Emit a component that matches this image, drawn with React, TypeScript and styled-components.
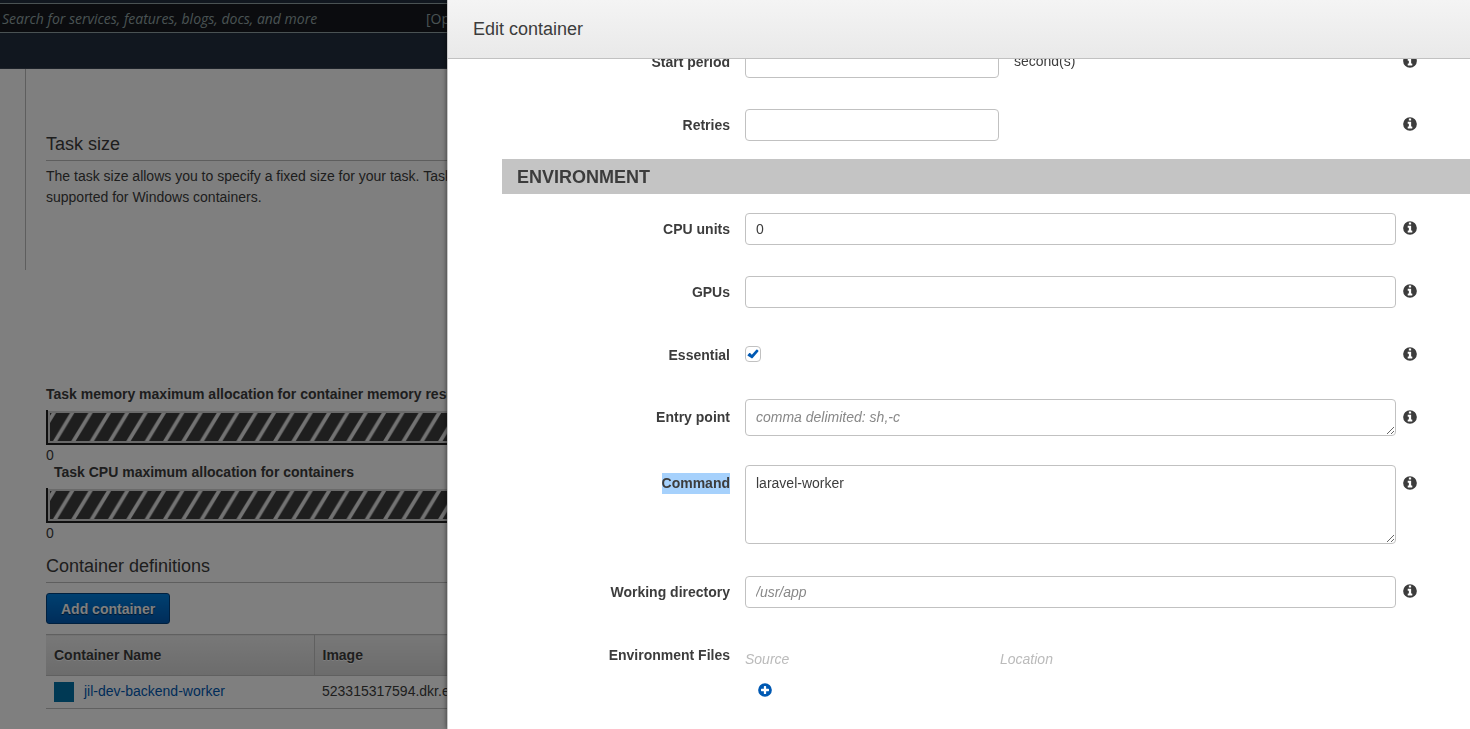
import React, { useId, useState } from 'react';
import styled, { createGlobalStyle } from 'styled-components';

const GlobalStyle = createGlobalStyle`
  *, *::before, *::after { box-sizing: border-box; }
  body {
    margin: 0;
    color: #3c3c3c;
    background: #fff;
    font-family: "Liberation Sans", Arial, sans-serif;
    font-size: 14px;
    line-height: 21px;
  }
  input, textarea, button { font: inherit; color: inherit; }
`;

/* ---------- console page behind the dialog ---------- */

const Page = styled.div`
  height: 100vh;
  overflow: hidden;
`;

const TopNav = styled.header`
  height: 69px;
  padding-top: 3px;
  background: #232f3e;
  border-bottom: 1px solid #3b4552;
`;

const SearchBox = styled.div`
  display: flex;
  align-items: center;
  height: 30px;
  padding-left: 2px;
  background: #16191f;
  border: solid #95a5a6;
  border-width: 1px 0;
  font-family: "Open Sans", sans-serif;
  color: #95a5a6;
`;

const SearchInput = styled.input`
  width: 424px;
  padding: 0;
  border: 0;
  background: none;
  &::placeholder { color: #95a5a6; font-style: italic; opacity: 1; }
`;

const Content = styled.main`
  margin-left: 25px;
`;

const SizeSection = styled.section`
  height: 201px;
  padding: 63px 0 0 20px;
  border-left: 1px solid #bdbdbd;
`;

const Heading = styled.h2`
  margin: 0;
  padding-bottom: 4px;
  border-bottom: 1px solid #bdbdbd;
  font-size: 18px;
  line-height: 24px;
  font-weight: 400;
`;

const Paragraph = styled.p`
  margin: 5px 0 0;
  white-space: nowrap;
`;

const Details = styled.section`
  padding: 114px 0 0 21px;
`;

const BarTitle = styled.div<{ $indent?: boolean }>`
  padding-left: ${(p) => (p.$indent ? '8px' : '0')};
  margin-bottom: 5px;
  font-weight: 700;
  white-space: nowrap;
`;

const BarTrack = styled.div`
  height: 35px;
  padding: 1px 0 0;
  border: solid #202020;
  border-width: 0 0 2px 2px;
`;

const BarFrame = styled.div`
  height: 32px;
  border: 2px solid #d4d4d4;
`;

const BarSvg = styled.svg`
  display: block;
  width: 100%;
  height: 28px;
`;

const BarScale = styled.div`
  line-height: 17px;
  padding-top: 2px;
  margin-bottom: -2px;
`;

const Definitions = styled.section`
  padding: 14px 0 0 21px;
`;

const PrimaryButton = styled.button`
  display: block;
  height: 31px;
  margin: 10px 0;
  padding: 2px 14px 0;
  border: 1px solid #00407f;
  border-radius: 3px;
  background: linear-gradient(#0080e0, #005ab4);
  color: #fff;
  font-weight: 700;
  text-shadow: 0 1px 1px #002a55;
`;

const Table = styled.table`
  width: 100%;
  border-collapse: collapse;
  table-layout: fixed;
`;

const Th = styled.th<{ $first?: boolean }>`
  width: ${(p) => (p.$first ? '268px' : 'auto')};
  height: 41px;
  padding: 0 8px;
  text-align: left;
  border: solid #c1c1c1;
  border-width: 1px 0;
  border-right: ${(p) => (p.$first ? '1px solid #c1c1c1' : '0')};
  background: linear-gradient(#f0f0f0, #d8d8d8);
  text-shadow: 0 1px 0 #fff;
`;

const Td = styled.td`
  height: 33px;
  padding: 0 7px 1px 8px;
  border-bottom: 1px solid #c1c1c1;
`;

const NameCell = styled.div`
  display: flex;
  align-items: center;
  gap: 10px;
`;

const Swatch = styled.span`
  width: 20px;
  height: 20px;
  background: #0073a8;
`;

const NameLink = styled.a`
  color: #0059b3;
  text-decoration: none;
`;

const Backdrop = styled.div`
  position: fixed;
  inset: 0;
  background: rgba(0, 0, 0, 0.5);
`;

/* ---------- dialog ---------- */

const Panel = styled.aside`
  position: fixed;
  inset: 0 0 0 447px;
  display: flex;
  flex-direction: column;
  background: #fff;
  border-left: 1px solid #c8c8c8;
  box-shadow: 0 0 5px rgba(0, 0, 0, 0.6);
`;

const PanelHeader = styled.header`
  flex: none;
  height: 59px;
  padding: 17px 25px 0;
  background: linear-gradient(#f4f4f4, #e9e9e9);
  border-bottom: 1px solid #c1c1c1;
`;

const PanelTitle = styled.h1`
  margin: 0;
  font-size: 18px;
  line-height: 24px;
  font-weight: 400;
`;

const PanelBody = styled.div`
  flex: 1;
  min-height: 0;
  overflow: hidden;
`;

/* The form starts slightly scrolled under the header. */
const Form = styled.form`
  margin-top: -13px;
  padding-left: 54px;
`;

const Group = styled.div`
  display: flex;
  flex-direction: column;
  gap: 31px;
`;

const Row = styled.div<{ $multiline?: boolean }>`
  display: grid;
  grid-template-columns: 228px minmax(0, 1fr) 16px;
  column-gap: 15px;
  align-items: start;
  min-height: 32px;
  padding-right: 52px;
  margin-top: ${(p) => (p.$multiline ? '-3px' : '0')};
  margin-bottom: ${(p) => (p.$multiline ? '1px' : '0')};
  --text-top: ${(p) => (p.$multiline ? '8px' : '6px')};
  --icon-top: ${(p) => (p.$multiline ? '10px' : '7px')};
`;

const LabelCell = styled.div`
  padding-top: var(--text-top);
  text-align: right;
  font-weight: 700;
`;

const Highlight = styled.mark`
  display: inline-block;
  color: inherit;
  background: #a6d1fc;
`;

const Control = styled.div`
  display: flex;
  align-items: flex-start;
  margin-right: -9px;
`;

const TextInput = styled.input<{ $short?: boolean }>`
  width: ${(p) => (p.$short ? '39%' : '100%')};
  height: 32px;
  padding: 0 10px;
  border: 1px solid #c1c1c1;
  border-radius: 4px;
  background: #fff;
  &::placeholder { color: #888; font-style: italic; opacity: 1; }
`;

const TextArea = styled.textarea<{ $tall?: boolean }>`
  display: block;
  width: 100%;
  height: ${(p) => (p.$tall ? '79px' : '37px')};
  padding: 7px 10px;
  border: 1px solid #c1c1c1;
  border-radius: 4px;
  background: #fff;
  overflow: hidden;
  resize: vertical;
  &::placeholder { color: #888; font-style: italic; opacity: 1; }
`;

const Unit = styled.span`
  padding: 5px 0 0 15px;
`;

const CheckWrap = styled.span`
  display: grid;
  place-items: center;
  margin-top: 7px;
  width: 16px;
  height: 16px;
  > * { grid-area: 1 / 1; }
  > svg { pointer-events: none; }
`;

const CheckInput = styled.input`
  appearance: none;
  width: 16px;
  height: 16px;
  margin: 0;
  border: 1px solid #c1c1c1;
  border-radius: 4px;
  background: #fff;
  & + svg { visibility: hidden; }
  &:checked + svg { visibility: visible; }
`;

const IconButton = styled.button<{ $accent?: boolean }>`
  display: block;
  width: 16px;
  height: 16px;
  padding: 0;
  border: 0;
  background: none;
  color: ${(p) => (p.$accent ? '#0059b3' : '#3c3c3c')};
  > svg { display: block; }
`;

const InfoCell = styled.div`
  padding-top: var(--icon-top);
`;

const SectionTitle = styled.h2`
  margin: 18px 0 19px;
  padding: 1px 15px 0;
  background: #c4c4c4;
  font-size: 18px;
  line-height: 34px;
  font-weight: 700;
`;

const FilesGrid = styled.div`
  flex: 1;
  display: grid;
  grid-template-columns: 255px 1fr;
  row-gap: 12px;
  padding-top: 10px;
  color: #bbb;
  font-style: italic;
`;

const AddCell = styled.div`
  padding-left: 12px;
`;

/* ---------- icons ---------- */

const InfoIcon = () => (
  <svg width="16" height="16" viewBox="0 0 1792 1792" fill="currentColor" aria-hidden="true">
    <path
      fillRule="evenodd"
      d="M1152 1376v-160q0-14-9-23t-23-9h-96v-512q0-14-9-23t-23-9h-320q-14 0-23 9t-9 23v160q0 14 9 23t23 9h96v320h-96q-14 0-23 9t-9 23v160q0 14 9 23t23 9h448q14 0 23-9t9-23zM1024 480v-160q0-14-9-23t-23-9h-192q-14 0-23 9t-9 23v160q0 14 9 23t23 9h192q14 0 23-9t9-23zM1664 896a768 768 0 1 1-1536 0a768 768 0 1 1 1536 0z"
    />
  </svg>
);

const PlusIcon = () => (
  <svg width="16" height="16" viewBox="0 0 1792 1792" fill="currentColor" aria-hidden="true">
    <path
      fillRule="evenodd"
      d="M1344 960v-128q0-26-19-45t-45-19h-256v-256q0-26-19-45t-45-19h-128q-26 0-45 19t-19 45v256h-256q-26 0-45 19t-19 45v128q0 26 19 45t45 19h256v256q0 26 19 45t45 19h128q26 0 45-19t19-45v-256h256q26 0 45-19t19-45zM1664 896a768 768 0 1 1-1536 0a768 768 0 1 1 1536 0z"
    />
  </svg>
);

const CheckIcon = () => (
  <svg width="12" height="12" viewBox="0 0 12 12" fill="#0059b3" aria-hidden="true">
    <path d="M.6 6.900 2.300 5.100Q2.700 4.700 3.100 5.100L4.800 6.700 9.300 1.700Q9.700 1.300 10.100 1.600L11.300 2.600Q11.700 3 11.300 3.400L5.700 10Q5 10.700 4.300 10.100L.7 7.700Q.3 7.300 .6 6.900Z" />
  </svg>
);

/* ---------- pieces ---------- */

function AllocationBar() {
  const id = useId();
  return (
    <>
      <BarTrack>
        <BarFrame>
          <BarSvg aria-hidden="true">
            <defs>
              <pattern id={id} width="55" height="84" patternUnits="userSpaceOnUse" patternTransform="scale(0.3335)">
                <rect width="55" height="84" fill="#3c3c3c" />
                <path d="M60 0H73L22 84H9ZM5 0H18L-33 84H-46Z" fill="#fff" fillOpacity="0.87" />
              </pattern>
            </defs>
            <rect width="100%" height="28" fill={`url(#${id})`} />
          </BarSvg>
        </BarFrame>
      </BarTrack>
      <BarScale>0</BarScale>
    </>
  );
}

type FieldProps = {
  label: string;
  id: string;
  multiline?: boolean;
  highlighted?: boolean;
  info?: boolean;
  children: React.ReactNode;
};

function Field({ label, id, multiline, highlighted, info = true, children }: FieldProps) {
  return (
    <Row $multiline={multiline}>
      <LabelCell>
        <label htmlFor={id}>{highlighted ? <Highlight>{label}</Highlight> : label}</label>
      </LabelCell>
      <Control>{children}</Control>
      {info && (
        <InfoCell>
          <IconButton type="button" aria-label={`About ${label}`}>
            <InfoIcon />
          </IconButton>
        </InfoCell>
      )}
    </Row>
  );
}

export default function App() {
  const [essential, setEssential] = useState(true);
  return (
    <>
      <GlobalStyle />
      <Page>
        <TopNav>
          <SearchBox>
            <SearchInput
              type="text"
              aria-label="Search"
              placeholder="Search for services, features, blogs, docs, and more"
            />
            <span>[Op</span>
          </SearchBox>
        </TopNav>
        <Content>
          <SizeSection>
            <Heading>Task size</Heading>
            <Paragraph>
              The task size allows you to specify a fixed size for your task. Task
              <br />
              supported for Windows containers.
            </Paragraph>
          </SizeSection>
          <Details>
            <BarTitle>Task memory maximum allocation for container memory reservation</BarTitle>
            <AllocationBar />
            <BarTitle $indent>Task CPU maximum allocation for containers</BarTitle>
            <AllocationBar />
          </Details>
          <Definitions>
            <Heading>Container definitions</Heading>
            <PrimaryButton type="button">Add container</PrimaryButton>
            <Table>
              <thead>
                <tr>
                  <Th $first>Container Name</Th>
                  <Th>Image</Th>
                </tr>
              </thead>
              <tbody>
                <tr>
                  <Td>
                    <NameCell>
                      <Swatch />
                      <NameLink href="#container">jil-dev-backend-worker</NameLink>
                    </NameCell>
                  </Td>
                  <Td>523315317594.dkr.ecr</Td>
                </tr>
              </tbody>
            </Table>
          </Definitions>
        </Content>
      </Page>
      <Backdrop />
      <Panel role="dialog" aria-label="Edit container">
        <PanelHeader>
          <PanelTitle>Edit container</PanelTitle>
        </PanelHeader>
        <PanelBody>
          <Form>
            <Group>
              <Field label="Start period" id="start-period">
                <TextInput id="start-period" type="text" $short />
                <Unit>second(s)</Unit>
              </Field>
              <Field label="Retries" id="retries">
                <TextInput id="retries" type="text" $short />
              </Field>
            </Group>
            <SectionTitle>ENVIRONMENT</SectionTitle>
            <Group>
              <Field label="CPU units" id="cpu">
                <TextInput id="cpu" type="text" defaultValue="0" />
              </Field>
              <Field label="GPUs" id="gpus">
                <TextInput id="gpus" type="text" />
              </Field>
              <Field label="Essential" id="essential">
                <CheckWrap>
                  <CheckInput
                    id="essential"
                    type="checkbox"
                    checked={essential}
                    onChange={(e) => setEssential(e.target.checked)}
                  />
                  <CheckIcon />
                </CheckWrap>
              </Field>
              <Field label="Entry point" id="entry" multiline>
                <TextArea id="entry" placeholder="comma delimited: sh,-c" />
              </Field>
              <Field label="Command" id="command" multiline highlighted>
                <TextArea id="command" defaultValue="laravel-worker" spellCheck={false} $tall />
              </Field>
              <Field label="Working directory" id="workdir">
                <TextInput id="workdir" type="text" placeholder="/usr/app" />
              </Field>
              <Field label="Environment Files" id="add-file" info={false}>
                <FilesGrid>
                  <span>Source</span>
                  <span>Location</span>
                  <AddCell>
                    <IconButton id="add-file" type="button" aria-label="Add environment file" $accent>
                      <PlusIcon />
                    </IconButton>
                  </AddCell>
                </FilesGrid>
              </Field>
            </Group>
          </Form>
        </PanelBody>
      </Panel>
    </>
  );
}
